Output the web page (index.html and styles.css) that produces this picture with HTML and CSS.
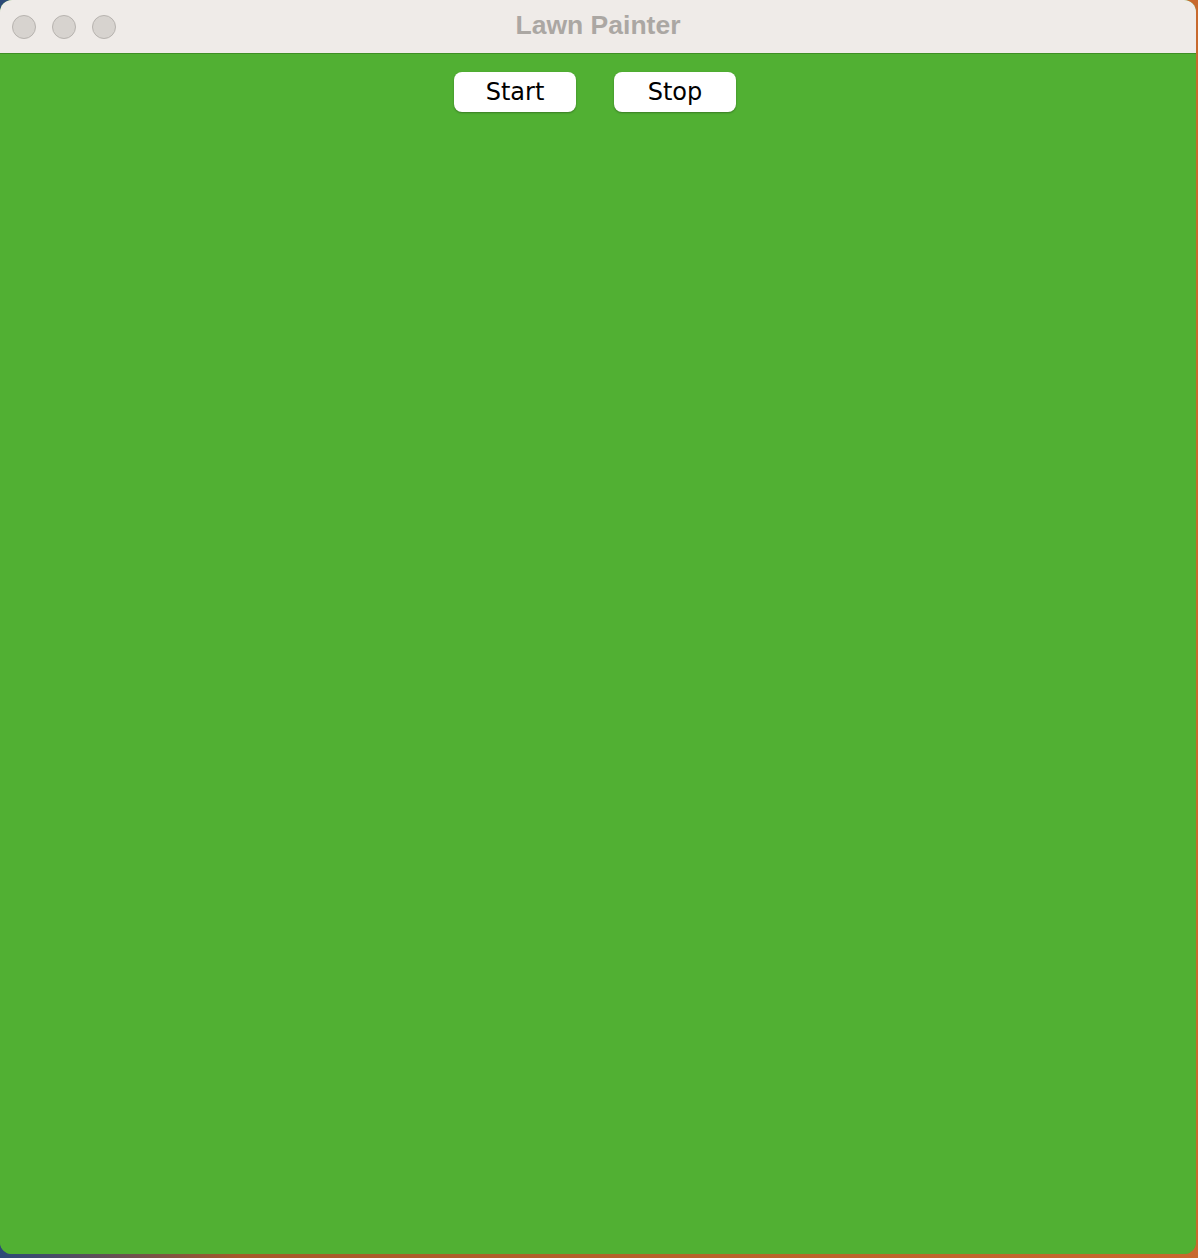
FILE: index.html
```html
<!DOCTYPE html>
<html>
<head>
<meta charset="utf-8">
<link rel="stylesheet" href="styles.css">
</head>
<body>
<div class="window">
  <div class="titlebar">
    <div class="lights">
      <span class="light"></span>
      <span class="light"></span>
      <span class="light"></span>
    </div>
    <div class="title">Lawn Painter</div>
  </div>
  <div class="lawn">
    <div class="toolbar">
      <button class="btn">Start</button>
      <button class="btn">Stop</button>
    </div>
  </div>
</div>
</body>
</html>
```
FILE: styles.css
```css
html, body {
  margin: 0;
  padding: 0;
  width: 1198px;
  height: 1258px;
  overflow: hidden;
}
body {
  background: linear-gradient(90deg, #2c4a78 0%, #a55a2a 20%, #b8652a 60%, #c8692e 100%);
  font-family: "DejaVu Sans", sans-serif;
}
.window {
  width: 1196px;
  height: 1254px;
  border-radius: 12px;
  overflow: hidden;
  display: flex;
  flex-direction: column;
  background: #51b033;
}
.titlebar {
  height: 53px;
  flex: none;
  background: #efebe8;
  border-bottom: 1px solid #3f8f25;
  display: flex;
  align-items: center;
  position: relative;
}
.lights {
  display: flex;
  gap: 16px;
  padding-left: 12px;
}
.light {
  width: 22px;
  height: 22px;
  border-radius: 50%;
  background: #d7d3cf;
  border: 1px solid #b7b3af;
}
.title {
  position: absolute;
  left: 0;
  right: 0;
  top: 0;
  height: 53px;
  line-height: 50px;
  text-align: center;
  font-family: "Liberation Sans", Arial, sans-serif;
  font-weight: bold;
  font-size: 26.5px;
  color: #aba7a3;
  pointer-events: none;
}
.lawn {
  flex: 1;
  background: #51b033;
}
.toolbar {
  display: flex;
  justify-content: center;
  gap: 38px;
  padding-top: 18px;
  padding-right: 6px;
}
.btn {
  width: 122px;
  height: 40px;
  border: none;
  border-radius: 8px;
  background: #ffffff;
  box-shadow: 0 1px 2px rgba(0,0,0,0.3);
  font-family: "DejaVu Sans", sans-serif;
  font-size: 24px;
  color: #000;
  padding: 0;
  line-height: 40px;
}
```
